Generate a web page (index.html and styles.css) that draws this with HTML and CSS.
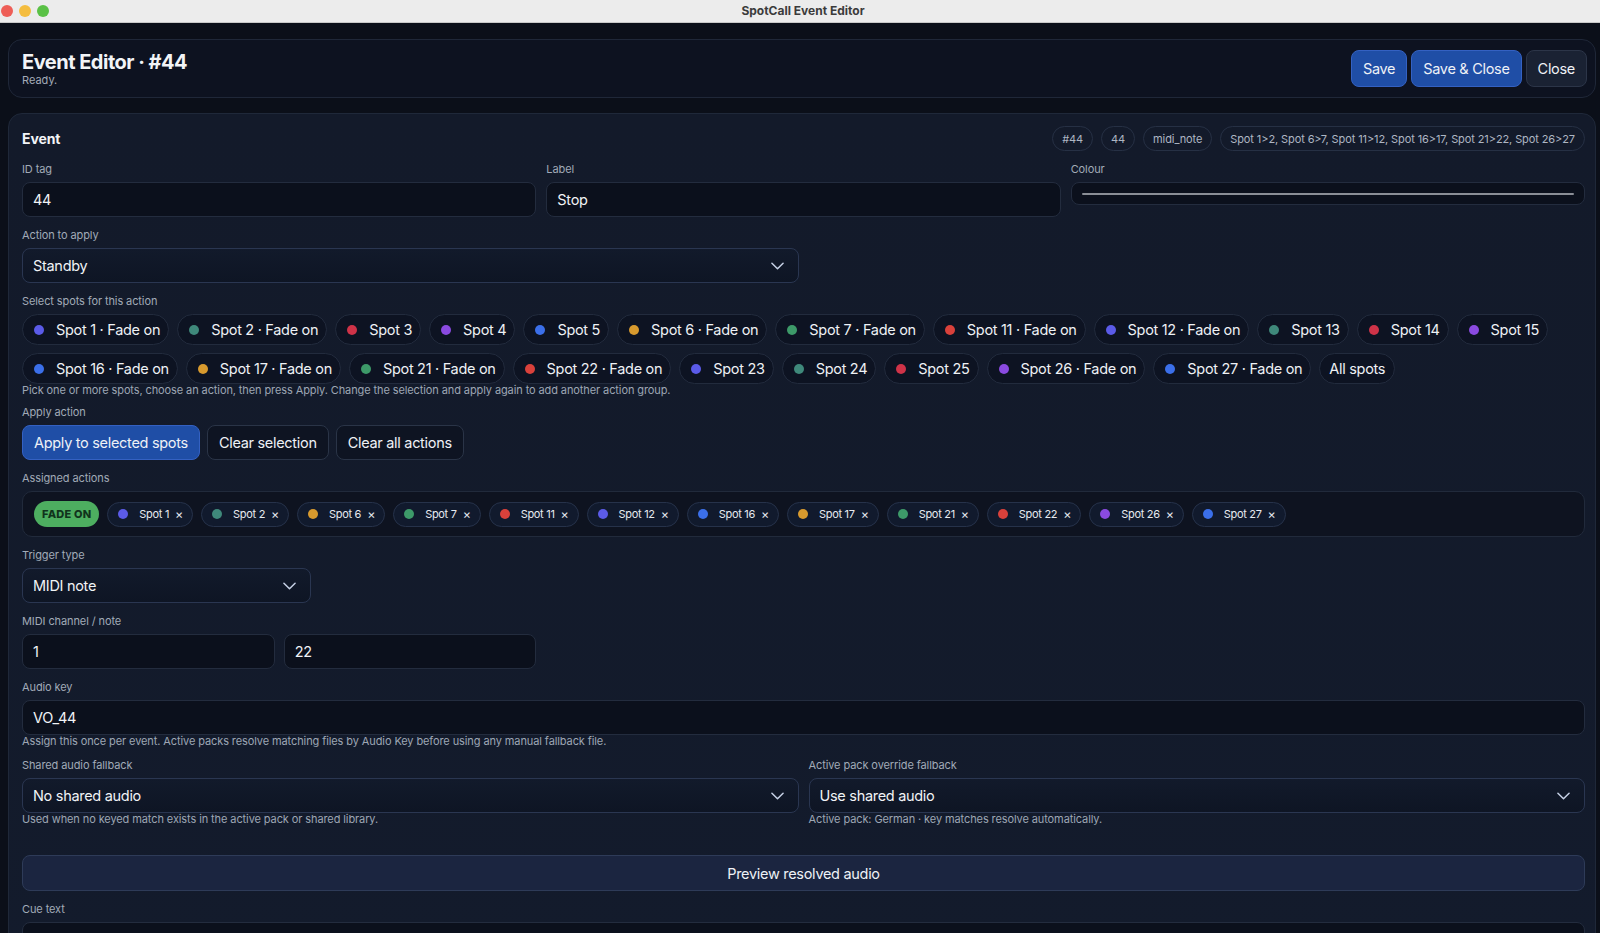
FILE: index.html
```html
<!DOCTYPE html>
<html lang="en">
<head>
<meta charset="utf-8">
<title>SpotCall Event Editor</title>
<link rel="stylesheet" href="styles.css">
</head>
<body>
<div class="titlebar">
  <div class="lights"><span class="light red"></span><span class="light yellow"></span><span class="light green"></span></div>
  <div class="wintitle">SpotCall Event Editor</div>
</div>
<main class="page">
  <header class="topcard">
    <div class="topcard-text">
      <h1>Event Editor · #44</h1>
      <div class="status">Ready.</div>
    </div>
    <div class="topcard-actions">
      <button class="btn btn-primary">Save</button>
      <button class="btn btn-primary">Save &amp; Close</button>
      <button class="btn btn-dark">Close</button>
    </div>
  </header>

  <section class="card">
    <div class="card-head">
      <h2>Event</h2>
      <div class="meta">
        <span class="meta-chip">#44</span>
        <span class="meta-chip">44</span>
        <span class="meta-chip">midi_note</span>
        <span class="meta-chip">Spot 1&gt;2, Spot 6&gt;7, Spot 11&gt;12, Spot 16&gt;17, Spot 21&gt;22, Spot 26&gt;27</span>
      </div>
    </div>

    <div class="grid3">
      <div class="field">
        <label>ID tag</label>
        <div class="input">44</div>
      </div>
      <div class="field">
        <label>Label</label>
        <div class="input">Stop</div>
      </div>
      <div class="field">
        <label>Colour</label>
        <div class="colour"><span class="colour-line"></span></div>
      </div>
    </div>

    <div class="grid2">
      <div class="field">
        <label>Action to apply</label>
        <div class="select">Standby<svg class="chev" viewBox="0 0 14 8"><polyline points="1,1 7,7 13,1"/></svg></div>
      </div>
    </div>

    <div class="field">
      <label>Select spots for this action</label>
      <div class="spots">
        <span class="spot"><i class="dot c1"></i>Spot 1 · Fade on</span>
        <span class="spot"><i class="dot c2"></i>Spot 2 · Fade on</span>
        <span class="spot"><i class="dot c3"></i>Spot 3</span>
        <span class="spot"><i class="dot c4"></i>Spot 4</span>
        <span class="spot"><i class="dot c5"></i>Spot 5</span>
        <span class="spot"><i class="dot c6"></i>Spot 6 · Fade on</span>
        <span class="spot"><i class="dot c7"></i>Spot 7 · Fade on</span>
        <span class="spot"><i class="dot c8"></i>Spot 11 · Fade on</span>
        <span class="spot"><i class="dot c1"></i>Spot 12 · Fade on</span>
        <span class="spot"><i class="dot c2"></i>Spot 13</span>
        <span class="spot"><i class="dot c3"></i>Spot 14</span>
        <span class="spot"><i class="dot c4"></i>Spot 15</span>
        <span class="spot"><i class="dot c5"></i>Spot 16 · Fade on</span>
        <span class="spot"><i class="dot c6"></i>Spot 17 · Fade on</span>
        <span class="spot"><i class="dot c7"></i>Spot 21 · Fade on</span>
        <span class="spot"><i class="dot c8"></i>Spot 22 · Fade on</span>
        <span class="spot"><i class="dot c1"></i>Spot 23</span>
        <span class="spot"><i class="dot c2"></i>Spot 24</span>
        <span class="spot"><i class="dot c3"></i>Spot 25</span>
        <span class="spot"><i class="dot c4"></i>Spot 26 · Fade on</span>
        <span class="spot"><i class="dot c5"></i>Spot 27 · Fade on</span>
        <span class="spot spot-all">All spots</span>
      </div>
      <div class="hint hint-tight">Pick one or more spots, choose an action, then press Apply. Change the selection and apply again to add another action group.</div>
    </div>

    <div class="field">
      <label>Apply action</label>
      <div class="btnrow">
        <button class="btn btn-primary">Apply to selected spots</button>
        <button class="btn btn-ghost">Clear selection</button>
        <button class="btn btn-ghost">Clear all actions</button>
      </div>
    </div>

    <div class="field">
      <label>Assigned actions</label>
      <div class="assigned">
        <span class="badge">FADE ON</span>
        <span class="tag"><i class="dot c1"></i>Spot 1<b>×</b></span>
        <span class="tag"><i class="dot c2"></i>Spot 2<b>×</b></span>
        <span class="tag"><i class="dot c6"></i>Spot 6<b>×</b></span>
        <span class="tag"><i class="dot c7"></i>Spot 7<b>×</b></span>
        <span class="tag"><i class="dot c8"></i>Spot 11<b>×</b></span>
        <span class="tag"><i class="dot c1"></i>Spot 12<b>×</b></span>
        <span class="tag"><i class="dot c5"></i>Spot 16<b>×</b></span>
        <span class="tag"><i class="dot c6"></i>Spot 17<b>×</b></span>
        <span class="tag"><i class="dot c7"></i>Spot 21<b>×</b></span>
        <span class="tag"><i class="dot c8"></i>Spot 22<b>×</b></span>
        <span class="tag"><i class="dot c4"></i>Spot 26<b>×</b></span>
        <span class="tag"><i class="dot c5"></i>Spot 27<b>×</b></span>
      </div>
    </div>

    <div class="field trigger">
      <label>Trigger type</label>
      <div class="select">MIDI note<svg class="chev" viewBox="0 0 14 8"><polyline points="1,1 7,7 13,1"/></svg></div>
    </div>

    <div class="grid3">
      <div class="field">
        <label>MIDI channel / note</label>
        <div class="pair">
          <div class="input">1</div>
          <div class="input">22</div>
        </div>
      </div>
    </div>

    <div class="field">
      <label>Audio key</label>
      <div class="input">VO_44</div>
      <div class="hint">Assign this once per event. Active packs resolve matching files by Audio Key before using any manual fallback file.</div>
    </div>

    <div class="grid2">
      <div class="field">
        <label>Shared audio fallback</label>
        <div class="select">No shared audio<svg class="chev" viewBox="0 0 14 8"><polyline points="1,1 7,7 13,1"/></svg></div>
        <div class="hint">Used when no keyed match exists in the active pack or shared library.</div>
      </div>
      <div class="field">
        <label>Active pack override fallback</label>
        <div class="select">Use shared audio<svg class="chev" viewBox="0 0 14 8"><polyline points="1,1 7,7 13,1"/></svg></div>
        <div class="hint">Active pack: German · key matches resolve automatically.</div>
      </div>
    </div>

    <button class="preview">Preview resolved audio</button>

    <div class="field">
      <label>Cue text</label>
      <div class="textarea"></div>
    </div>
  </section>
</main>
</body>
</html>
```
FILE: styles.css
```css
* { box-sizing: border-box; }
html, body { margin: 0; padding: 0; overflow: hidden; height: 933px; }
body {
  background: #0b0f19;
  color: #e8ebf0;
  font-family: "Inter", "Noto Sans", sans-serif;
}
.titlebar {
  height: 23px;
  background: #ececec;
  border-bottom: 1px solid #c9c9c9;
  position: relative;
  display: flex;
  align-items: center;
  justify-content: center;
}
.lights { position: absolute; left: 1px; top: 5px; display: flex; gap: 6px; }
.light { width: 12px; height: 12px; border-radius: 50%; display: block; }
.light.red { background: #ee5e57; }
.light.yellow { background: #f4bd3f; }
.light.green { background: #5ac146; }
.wintitle { font-size: 12px; font-weight: 700; color: #3b3b3b; margin: -2px 0 0 6px; }

.page { padding: 16px 4px 0 8px; display: flex; flex-direction: column; gap: 15px; }

.topcard {
  border: 1px solid #1f2738;
  background: #0d1220;
  border-radius: 14px;
  padding: 10px 8px 10px 13px;
  display: flex;
  align-items: center;
  justify-content: space-between;
}
.topcard h1 { margin: 0; font-size: 20px; line-height: 24px; font-weight: 700; letter-spacing: -0.5px; color: #f2f4f7; }
.status { font-size: 11px; line-height: 13px; color: #a3abb8; }
.topcard-actions { display: flex; gap: 4px; }

.btn {
  font-family: inherit;
  font-size: 14.5px;
  letter-spacing: -0.3px;
  height: 37px;
  padding: 0 11px;
  border-radius: 8px;
  color: #eef1f6;
  border: 1px solid #2a3447;
  background: #0e1422;
  cursor: pointer;
}
.btn-primary { background: #1f4ea6; border-color: #3461c2; }
.btn-dark { background: #1a2233; border-color: #2c3548; }
.btn-ghost { background: #0e1422; border-color: #2a3447; }
.btnrow .btn { height: 35px; }
.btnrow { display: flex; gap: 7px; }

.card {
  border: 1px solid #1f2839;
  background: linear-gradient(180deg, #131a2a 0%, #131b2c 100%);
  border-radius: 14px;
  padding: 12px 10px 20px 13px;
  display: flex;
  flex-direction: column;
  gap: 12px;
}
.card-head { display: flex; align-items: center; justify-content: space-between; height: 25px; }
.card-head h2 { margin: 0; font-size: 14px; font-weight: 700; color: #f2f4f7; letter-spacing: -0.1px; }
.meta { display: flex; gap: 8px; }
.meta-chip {
  height: 25px;
  display: inline-flex;
  align-items: center;
  padding: 0 9px;
  border-radius: 999px;
  border: 1px solid #263044;
  font-size: 11px;
  letter-spacing: -0.1px;
  color: #aeb6c3;
}

.grid3 { display: grid; grid-template-columns: repeat(3, 1fr); gap: 10px; }
.grid2 { display: grid; grid-template-columns: repeat(2, 1fr); gap: 10px; }

.field { display: flex; flex-direction: column; gap: 6px; min-width: 0; }
.field label { font-size: 11px; line-height: 13px; color: #a1aab7; letter-spacing: -0.1px; }
.hint { font-size: 11px; line-height: 12px; color: #9da6b4; margin-top: -6px; letter-spacing: -0.1px; }
.hint-tight { margin-bottom: -2px; }

.input {
  height: 35px;
  border: 1px solid #232c3e;
  background: #0b101c;
  border-radius: 8px;
  padding: 0 10px;
  display: flex;
  align-items: center;
  font-size: 14.5px;
  letter-spacing: -0.3px;
  color: #f1f3f6;
}
.colour {
  height: 23px;
  border: 1px solid #232c3e;
  background: #0b101c;
  border-radius: 8px;
  padding: 0 10px;
  display: flex;
  align-items: center;
}
.colour-line { display: block; height: 2px; width: 100%; background: #8a8e96; border-radius: 1px; }

.select {
  height: 35px;
  border: 1px solid #2a3651;
  background: linear-gradient(180deg, #121a2b 0%, #0e1524 100%);
  border-radius: 8px;
  padding: 0 14px 0 10px;
  display: flex;
  align-items: center;
  justify-content: space-between;
  font-size: 14.5px;
  letter-spacing: -0.3px;
  color: #f1f3f6;
}
.chev { width: 13px; height: 8px; fill: none; stroke: #c6d1e6; stroke-width: 1.6; stroke-linecap: round; stroke-linejoin: round; }
.trigger { width: 289px; }

.spots { display: flex; flex-wrap: wrap; gap: 8px; }
.spot {
  height: 31px;
  display: inline-flex;
  align-items: center;
  gap: 12px;
  padding: 0 8px 0 11px;
  border-radius: 999px;
  border: 1px solid #222b3d;
  background: #0d1322;
  font-size: 14.5px;
  letter-spacing: -0.3px;
  color: #eef1f5;
}
.spot-all { padding: 0 9px; }
.dot { display: block; width: 10px; height: 10px; border-radius: 50%; flex: none; }
.c1 { background: #5b5be8; }
.c2 { background: #3f897b; }
.c3 { background: #cf3348; }
.c4 { background: #8a4ae0; }
.c5 { background: #3b6fe9; }
.c6 { background: #d89a2e; }
.c7 { background: #3d9a69; }
.c8 { background: #d9413b; }

.assigned {
  height: 46px;
  border: 1px solid #212a3b;
  background: #0e1320;
  border-radius: 10px;
  padding: 0 11px;
  display: flex;
  align-items: center;
  gap: 8px;
}
.badge {
  height: 26px;
  padding: 0 8px;
  border-radius: 999px;
  background: #4dae60;
  color: #11331c;
  font-size: 11px;
  font-weight: 800;
  letter-spacing: 0.2px;
  display: inline-flex;
  align-items: center;
}
.tag {
  height: 25px;
  display: inline-flex;
  align-items: center;
  padding: 0 9px 0 10px;
  border-radius: 999px;
  border: 1px solid #26324a;
  background: #111a2d;
  font-size: 11px;
  letter-spacing: -0.3px;
  color: #e7eaf0;
}
.tag .dot { margin-right: 11px; }
.tag b { font-weight: 400; margin-left: 6px; font-size: 12.5px; }

.pair { display: grid; grid-template-columns: 1fr 1fr; gap: 9px; }

.preview {
  margin-top: 18px;
  height: 36px;
  font-family: inherit;
  font-size: 14.5px;
  letter-spacing: -0.3px;
  color: #eef1f6;
  background: #1b2540;
  border: 1px solid #2e3b58;
  border-radius: 8px;
}
.textarea {
  height: 60px;
  border: 1px solid #232c3e;
  background: #0b101c;
  border-radius: 8px;
}
```
